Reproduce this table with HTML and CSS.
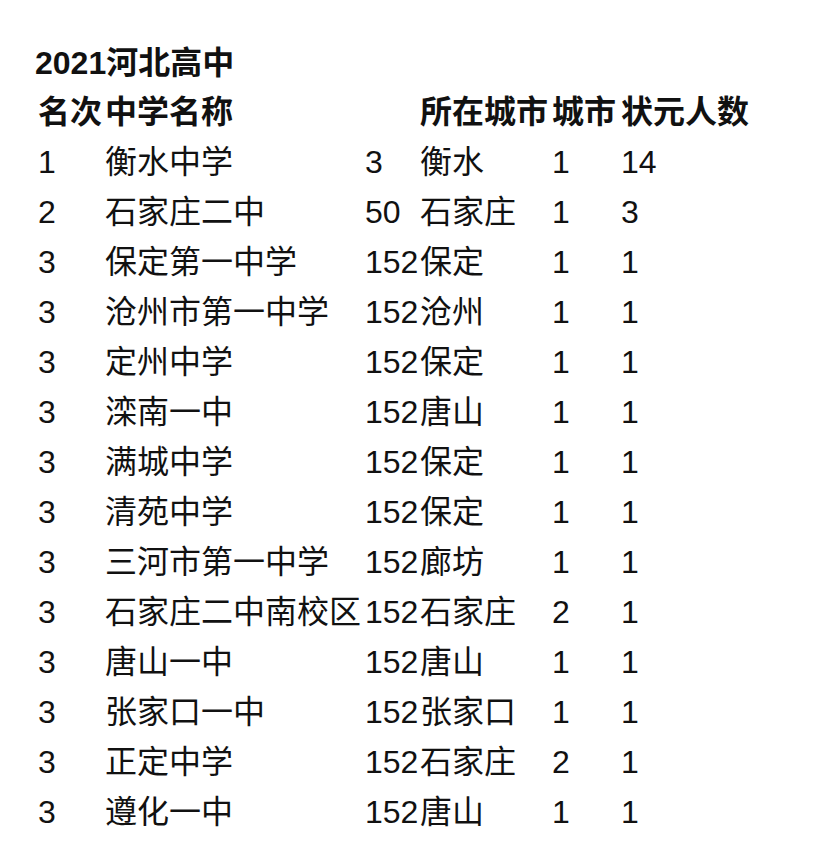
FILE: index.html
```html
<!DOCTYPE html>
<html lang="zh-CN">
<head>
<meta charset="utf-8">
<title>2021河北高中</title>
<link rel="stylesheet" href="styles.css">
</head>
<body>
<div class="page">
  <div class="title">2021河北高中</div>
  <div class="sheet">
    <div class="row head"><span>名次</span><span>中学名称</span><span></span><span>所在城市</span><span>城市</span><span>状元人数</span></div>
    <div class="row"><span>1</span><span>衡水中学</span><span>3</span><span>衡水</span><span>1</span><span>14</span></div>
    <div class="row"><span>2</span><span>石家庄二中</span><span>50</span><span>石家庄</span><span>1</span><span>3</span></div>
    <div class="row"><span>3</span><span>保定第一中学</span><span>152</span><span>保定</span><span>1</span><span>1</span></div>
    <div class="row"><span>3</span><span>沧州市第一中学</span><span>152</span><span>沧州</span><span>1</span><span>1</span></div>
    <div class="row"><span>3</span><span>定州中学</span><span>152</span><span>保定</span><span>1</span><span>1</span></div>
    <div class="row"><span>3</span><span>滦南一中</span><span>152</span><span>唐山</span><span>1</span><span>1</span></div>
    <div class="row"><span>3</span><span>满城中学</span><span>152</span><span>保定</span><span>1</span><span>1</span></div>
    <div class="row"><span>3</span><span>清苑中学</span><span>152</span><span>保定</span><span>1</span><span>1</span></div>
    <div class="row"><span>3</span><span>三河市第一中学</span><span>152</span><span>廊坊</span><span>1</span><span>1</span></div>
    <div class="row"><span>3</span><span>石家庄二中南校区</span><span>152</span><span>石家庄</span><span>2</span><span>1</span></div>
    <div class="row"><span>3</span><span>唐山一中</span><span>152</span><span>唐山</span><span>1</span><span>1</span></div>
    <div class="row"><span>3</span><span>张家口一中</span><span>152</span><span>张家口</span><span>1</span><span>1</span></div>
    <div class="row"><span>3</span><span>正定中学</span><span>152</span><span>石家庄</span><span>2</span><span>1</span></div>
    <div class="row"><span>3</span><span>遵化一中</span><span>152</span><span>唐山</span><span>1</span><span>1</span></div>
  </div>
</div>
</body>
</html>
```

FILE: styles.css
```css
html, body {
  margin: 0;
  padding: 0;
  background: #ffffff;
}

.page {
  padding: 39px 0 0 35px;
  font-family: "Liberation Sans", "Noto Sans CJK SC", sans-serif;
  font-size: 32px;
  color: #111111;
}

.title {
  font-weight: bold;
  line-height: 48px;
  height: 48px;
}

.sheet {
  display: flex;
  flex-direction: column;
  padding-left: 3px;
}

.row {
  display: grid;
  grid-template-columns: 67px 260px 55px 132px 69px auto;
  height: 50px;
  line-height: 50px;
  white-space: nowrap;
}

.row.head {
  font-weight: bold;
}
```
